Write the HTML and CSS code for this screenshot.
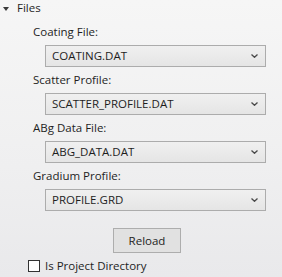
FILE: index.html
```html
<!DOCTYPE html>
<html>
<head>
<meta charset="utf-8">
<link rel="stylesheet" href="styles.css">
</head>
<body>
<div class="panel">
  <div class="header">
    <svg class="caret" width="6" height="4" viewBox="0 0 6 4"><path d="M0 0H6L3 4Z" fill="#3a3a3a"/></svg>
    <span class="title">Files</span>
  </div>
  <div class="fields">
    <div class="field">
      <div class="label">Coating File:</div>
      <div class="combo"><span class="value">COATING.DAT</span><svg class="chev" width="7" height="4" viewBox="0 0 7 4"><path d="M0.5 0.5L3.5 3.3L6.5 0.5" fill="none" stroke="#4a4a4a" stroke-width="1.3"/></svg></div>
    </div>
    <div class="field">
      <div class="label">Scatter Profile:</div>
      <div class="combo"><span class="value">SCATTER_PROFILE.DAT</span><svg class="chev" width="7" height="4" viewBox="0 0 7 4"><path d="M0.5 0.5L3.5 3.3L6.5 0.5" fill="none" stroke="#4a4a4a" stroke-width="1.3"/></svg></div>
    </div>
    <div class="field">
      <div class="label">ABg Data File:</div>
      <div class="combo"><span class="value">ABG_DATA.DAT</span><svg class="chev" width="7" height="4" viewBox="0 0 7 4"><path d="M0.5 0.5L3.5 3.3L6.5 0.5" fill="none" stroke="#4a4a4a" stroke-width="1.3"/></svg></div>
    </div>
    <div class="field">
      <div class="label">Gradium Profile:</div>
      <div class="combo"><span class="value">PROFILE.GRD</span><svg class="chev" width="7" height="4" viewBox="0 0 7 4"><path d="M0.5 0.5L3.5 3.3L6.5 0.5" fill="none" stroke="#4a4a4a" stroke-width="1.3"/></svg></div>
    </div>
  </div>
  <div class="button-row"><div class="button">Reload</div></div>
  <div class="check-row"><span class="checkbox"></span><span class="check-label">Is Project Directory</span></div>
</div>
</body>
</html>
```
FILE: styles.css
```css
html, body {
  margin: 0;
  padding: 0;
}
body {
  width: 282px;
  height: 277px;
  overflow: hidden;
  background: linear-gradient(to bottom, #f6f6f6 0%, #efeff0 60%, #e9e9eb 100%);
  font-family: "Open Sans", "Liberation Sans", sans-serif;
  font-size: 11.5px;
  color: #1e1e1e;
}
.panel {
  display: flex;
  flex-direction: column;
}
.header {
  display: flex;
  align-items: center;
  height: 16px;
  padding-left: 3px;
}
.caret {
  display: block;
  margin-top: 1px;
}
.title {
  margin-left: 8px;
  line-height: 16px;
}
.fields {
  display: flex;
  flex-direction: column;
  padding-top: 8px;
}
.field {
  display: flex;
  flex-direction: column;
  height: 48px;
}
.label {
  line-height: 16px;
  height: 16px;
  margin-left: 33px;
  margin-bottom: 5px;
}
.combo {
  box-sizing: border-box;
  margin-left: 45px;
  width: 221px;
  height: 22px;
  border: 1px solid #acacac;
  background: linear-gradient(to bottom, #f0f0f0, #e5e5e5);
  display: flex;
  align-items: center;
  justify-content: space-between;
  padding-left: 6px;
  padding-right: 7px;
}
.value {
  line-height: 16px;
}
.chev {
  display: block;
}
.button-row {
  display: flex;
  padding-top: 12px;
  padding-left: 113px;
}
.button {
  box-sizing: border-box;
  width: 68px;
  height: 25px;
  border: 1px solid #adadad;
  background: #e1e1e1;
  display: flex;
  align-items: center;
  justify-content: center;
  line-height: 16px;
}
.check-row {
  display: flex;
  align-items: center;
  padding-left: 28px;
  padding-top: 5px;
}
.checkbox {
  box-sizing: border-box;
  width: 12px;
  height: 12px;
  border: 1px solid #333;
  background: #fff;
}
.check-label {
  margin-left: 5px;
  line-height: 16px;
}
```
